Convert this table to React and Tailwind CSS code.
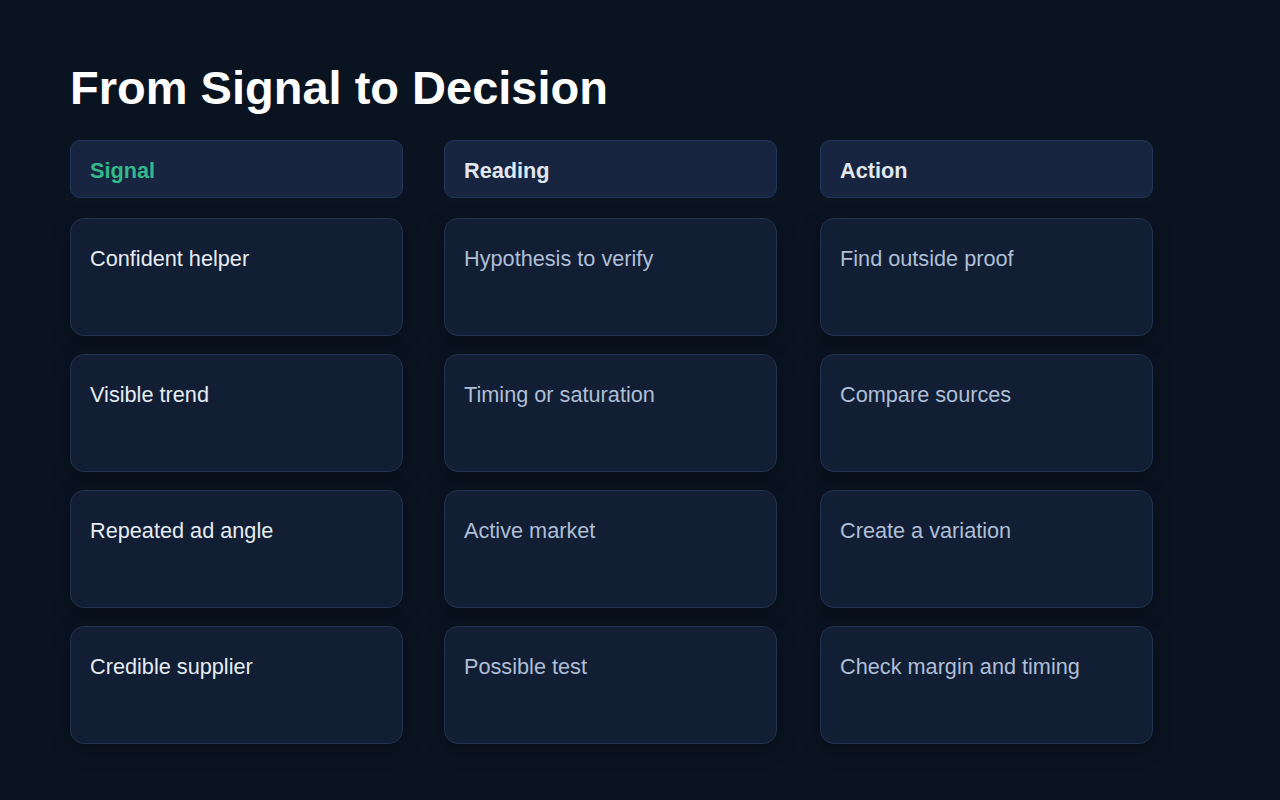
import React from 'react';

const columns = [
  {
    title: 'Signal',
    accent: true,
    items: ['Confident helper', 'Visible trend', 'Repeated ad angle', 'Credible supplier'],
  },
  {
    title: 'Reading',
    items: ['Hypothesis to verify', 'Timing or saturation', 'Active market', 'Possible test'],
  },
  {
    title: 'Action',
    items: ['Find outside proof', 'Compare sources', 'Create a variation', 'Check margin and timing'],
  },
];

const App = () => {
  return (
    <div
      className="min-h-screen w-full bg-[#0a1320] px-[70px] pt-[63px]"
      style={{ fontFamily: '"Liberation Sans", Arial, sans-serif' }}
    >
      {/* Title */}
      <h1 className="text-[47px] leading-[50px] font-bold text-white mb-[27px]">From Signal to Decision</h1>

      {/* Three columns */}
      <div className="grid grid-cols-[333px_333px_335px] gap-x-[41px]">
        {columns.map((col, i) => (
          <div key={col.title} className={`flex flex-col w-[333px] ${i === 2 ? 'ml-[2px]' : ''}`}>
            <div className="h-[58px] rounded-[10px] border border-[#24355a] bg-[#172540] px-[19px] pt-[15px] mb-[20px]">
              <span
                className={`block text-[21.7px] leading-[30px] font-bold ${col.accent ? 'text-[#35b88a]' : 'text-[#e2e8f0]'}`}
              >
                {col.title}
              </span>
            </div>
            <div className="flex flex-col gap-[18px]">
              {col.items.map((item) => (
                <div
                  key={item}
                  className="h-[118px] rounded-[14px] border border-[#22324f] bg-[#111e34] px-[19px] pt-[25px] shadow-[0_6px_20px_rgba(0,0,0,0.25)]"
                >
                  <span className={`block text-[21.7px] leading-[30px] ${i === 0 ? 'text-[#e6ecf4]' : 'text-[#afbfd6]'}`}>
                    {item}
                  </span>
                </div>
              ))}
            </div>
          </div>
        ))}
      </div>
    </div>
  );
};

export default App;
